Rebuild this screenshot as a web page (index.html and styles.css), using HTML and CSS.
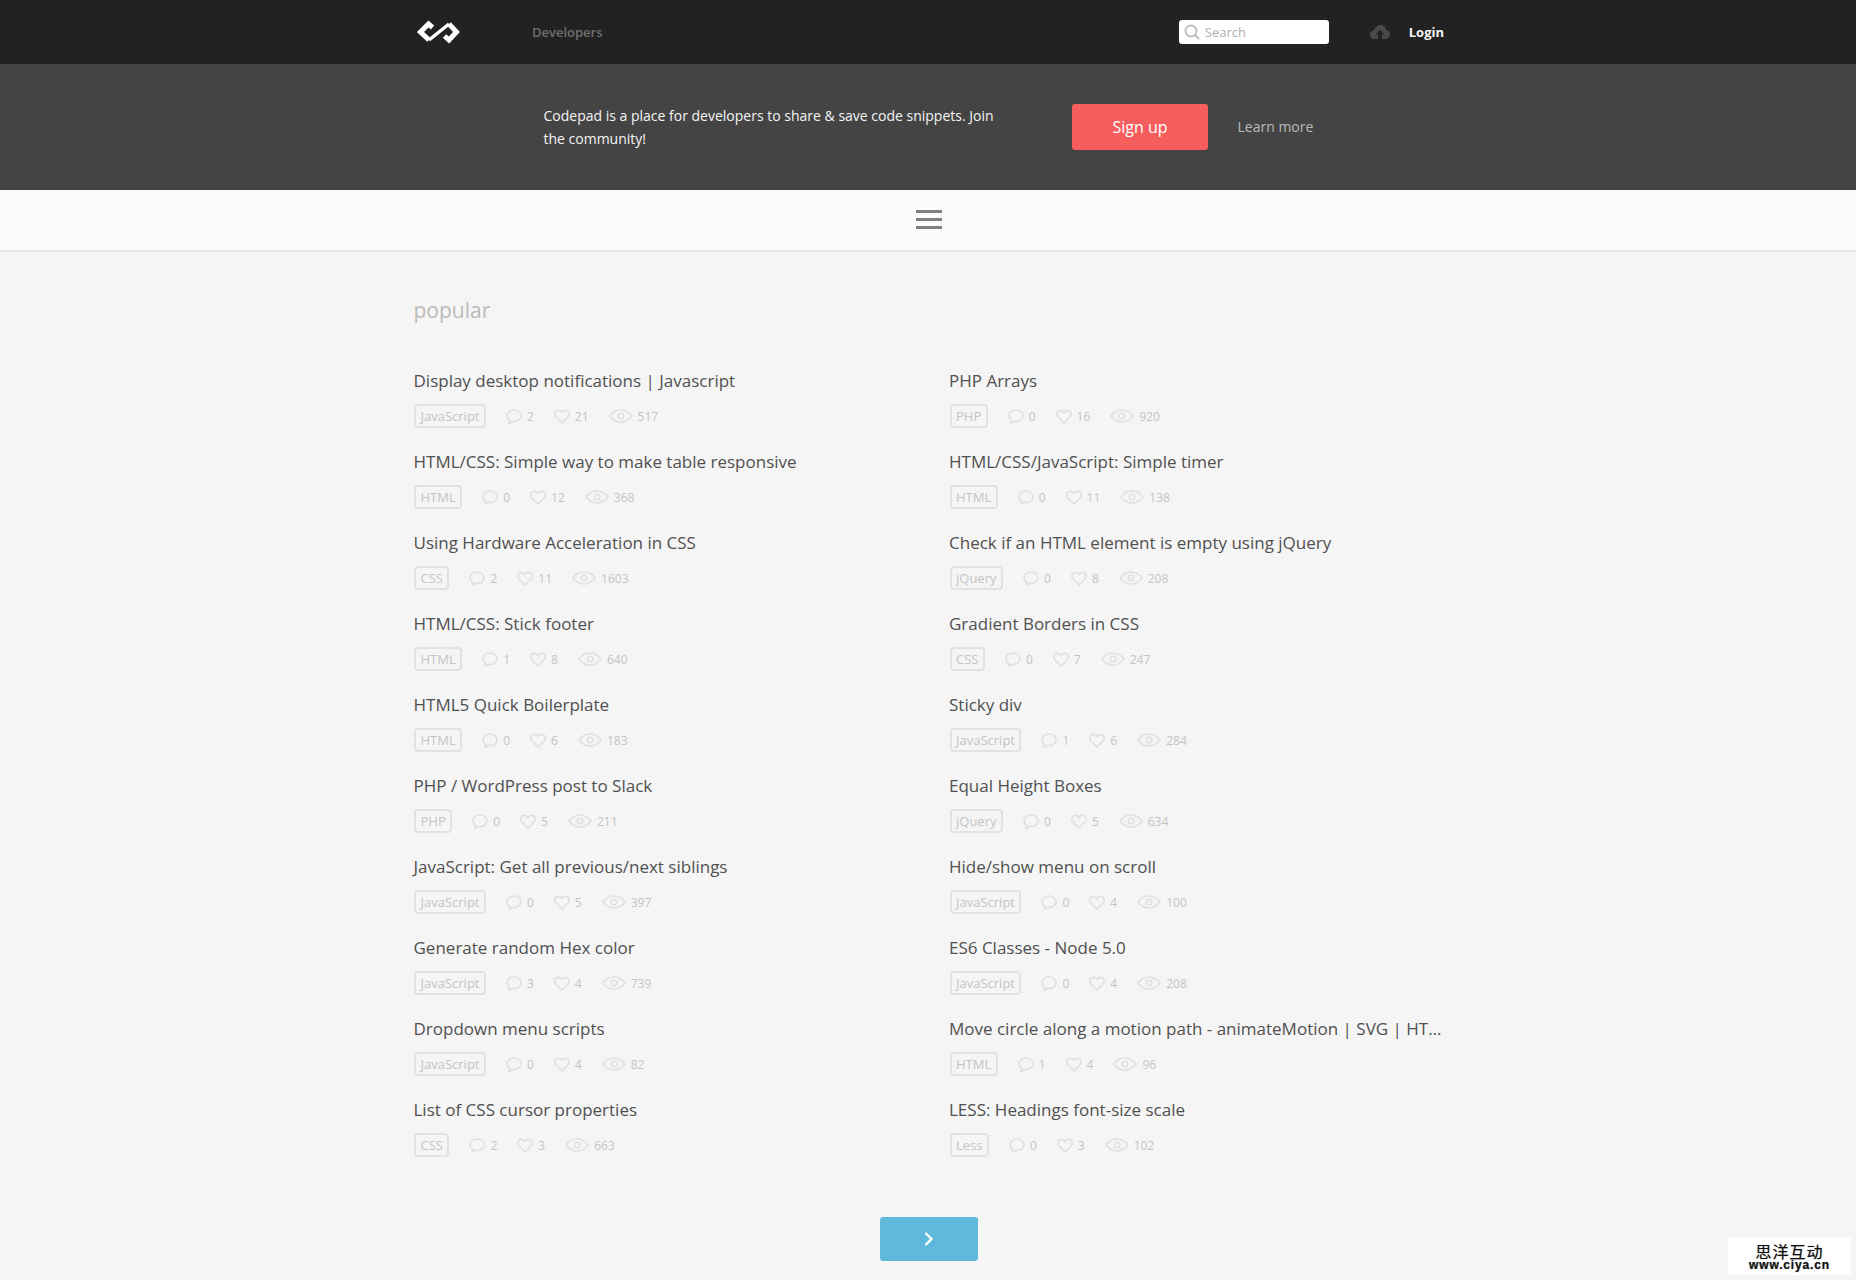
FILE: index.html
```html
<!DOCTYPE html>
<html>
<head>
    <meta charset="utf-8" />
    <title>Codepad</title>
    <link rel="stylesheet" href="styles.css">
</head>
<body>
    <div class="top-bar">
        <div class="top-bar-inner">
            <svg class="logo" width="44" height="24" viewBox="0 0 44 24">
                <path d="M15.5 7.5 L11.5 4 L3.5 12 L12 20" fill="none" stroke="#fff" stroke-width="5"/>
                <path d="M12 20 L32 4" fill="none" stroke="#fff" stroke-width="3.500"/>
                <path d="M32 4 L39.500 12 L32 20 L27.5 16" fill="none" stroke="#fff" stroke-width="5"/>
            </svg>
            <a class="top-bar-link">Developers</a>
            <div class="search-box">
                <svg width="16" height="16" viewBox="0 0 16 16">
                    <circle cx="7" cy="7" r="5.5" fill="none" stroke="#bbb" stroke-width="1.8"/>
                    <path d="M11 11 L15 15" stroke="#bbb" stroke-width="2"/>
                </svg>
                <span class="search-box-text">Search</span>
            </div>
            <svg class="cloud" width="20" height="14" viewBox="0 0 20 14">
                <path d="M4.5 14 C1 14 0 11.500 0 9.500 C0 7 2 5.500 4 5.500 C5 2 8 0 11 0 C14 0 16 2.500 16 5 C18.500 5.500 20 7.500 20 9.500 C20 12 18 14 15.500 14 Z" fill="#4a4a4a"/>
                <path d="M10 5 L14.500 9.500 L12 9.500 L12 14 L8 14 L8 9.500 L5.500 9.500 Z" fill="#222"/>
            </svg>
            <a class="login-link">Login</a>
        </div>
    </div>

    <div class="banner">
        <div class="banner-inner">
            <p class="banner-text">Codepad is a place for developers to share &amp; save code snippets. Join the community!</p>
            <a class="signup-button">Sign up</a>
            <a class="learn-more">Learn more</a>
        </div>
    </div>

    <div class="menu-bar">
        <div class="menu-icon">
            <span></span>
            <span></span>
            <span></span>
        </div>
    </div>

    <div class="main">
        <h2 class="main-title">popular</h2>
        <div class="post-list" id="posts"></div>
        <a class="next-button">
            <svg width="10" height="14" viewBox="0 0 10 14">
                <path d="M1.500 1 L7.500 7 L1.500 13" fill="none" stroke="#fff" stroke-width="2.400"/>
            </svg>
        </a>
    </div>

    <div class="watermark">
        <div class="watermark-cn">思洋互动</div>
        <div class="watermark-url">www.ciya.cn</div>
    </div>

<script>
    var posts = [
        ['Display desktop notifications | Javascript', 'JavaScript', 2, 21, 517],
        ['PHP Arrays', 'PHP', 0, 16, 920],
        ['HTML/CSS: Simple way to make table responsive', 'HTML', 0, 12, 368],
        ['HTML/CSS/JavaScript: Simple timer', 'HTML', 0, 11, 138],
        ['Using Hardware Acceleration in CSS', 'CSS', 2, 11, 1603],
        ['Check if an HTML element is empty using jQuery', 'jQuery', 0, 8, 208],
        ['HTML/CSS: Stick footer', 'HTML', 1, 8, 640],
        ['Gradient Borders in CSS', 'CSS', 0, 7, 247],
        ['HTML5 Quick Boilerplate', 'HTML', 0, 6, 183],
        ['Sticky div', 'JavaScript', 1, 6, 284],
        ['PHP / WordPress post to Slack', 'PHP', 0, 5, 211],
        ['Equal Height Boxes', 'jQuery', 0, 5, 634],
        ['JavaScript: Get all previous/next siblings', 'JavaScript', 0, 5, 397],
        ['Hide/show menu on scroll', 'JavaScript', 0, 4, 100],
        ['Generate random Hex color', 'JavaScript', 3, 4, 739],
        ['ES6 Classes - Node 5.0', 'JavaScript', 0, 4, 208],
        ['Dropdown menu scripts', 'JavaScript', 0, 4, 82],
        ['Move circle along a motion path - animateMotion | SVG | HT…', 'HTML', 1, 4, 96],
        ['List of CSS cursor properties', 'CSS', 2, 3, 663],
        ['LESS: Headings font-size scale', 'Less', 0, 3, 102]
    ];

    var comment = '<svg width="16" height="15" viewBox="0 0 16 15"><path d="M8 1 C4 1 1 3.500 1 6.800 C1 8.700 2 10.200 3.600 11.200 L3.200 14 L6.500 12.400 C7 12.500 7.500 12.500 8 12.500 C12 12.500 15 10 15 6.800 C15 3.500 12 1 8 1 Z" fill="none" stroke="#e0e0e0" stroke-width="1.700"/></svg>';
    var heart = '<svg width="16" height="15" viewBox="0 0 16 15"><path d="M8 14 L2 8 C0.300 6.200 0.500 3.500 2 2.200 C3.700 0.800 6.300 1.100 8 3.400 C9.700 1.100 12.300 0.800 14 2.200 C15.500 3.500 15.700 6.200 14 8 Z" fill="none" stroke="#e0e0e0" stroke-width="1.700"/></svg>';
    var eye = '<svg width="24" height="14" viewBox="0 0 24 14"><path d="M1 7 C4 3 8 1 12 1 C16 1 20 3 23 7 C20 11 16 13 12 13 C8 13 4 11 1 7 Z" fill="none" stroke="#e0e0e0" stroke-width="1.600"/><circle cx="12" cy="7" r="2.800" fill="none" stroke="#e0e0e0" stroke-width="1.600"/></svg>';

    var html = '';
    posts.forEach(function(p) {
        html += '<div class="post">' +
            '<a class="post-title">' + p[0] + '</a>' +
            '<div class="post-meta">' +
            '<span class="post-tag">' + p[1] + '</span>' +
            '<span class="post-stat post-stat-first">' + comment + p[2] + '</span>' +
            '<span class="post-stat">' + heart + p[3] + '</span>' +
            '<span class="post-stat">' + eye + p[4] + '</span>' +
            '</div></div>';
    });
    document.getElementById('posts').innerHTML = html;
</script>
</body>
</html>
```

FILE: styles.css
```css
body {
    margin: 0;
    padding: 0;
    background-color: #F5F5F5;
    font-family: "Open Sans", sans-serif;
    height: 1280px;
    overflow: hidden;
    position: relative;
}

.top-bar {
    height: 64px;
    background-color: #222222;
}

.top-bar-inner {
    width: 1030px;
    height: 64px;
    margin-left: 414px;
    display: flex;
    align-items: center;
}

.logo {
    margin-left: 3px;
}

.top-bar-link {
    margin-left: 71px;
    font-size: 13px;
    font-weight: 600;
    color: #707070;
}

.search-box {
    margin-left: auto;
    width: 150px;
    height: 24px;
    background-color: #FFFFFF;
    border-radius: 3px;
    display: flex;
    align-items: center;
    padding-left: 5px;
    box-sizing: border-box;
}

.search-box-text {
    margin-left: 5px;
    font-size: 13px;
    color: #B0B0B0;
}

.cloud {
    margin-left: 41px;
}

.login-link {
    margin-left: 19px;
    font-size: 13px;
    font-weight: 700;
    color: #F5F5F5;
}

.banner {
    height: 126px;
    background-color: #444444;
}

.banner-inner {
    width: 1030px;
    height: 126px;
    margin-left: 414px;
    display: flex;
    align-items: center;
}

.banner-text {
    margin: 0 0 0 129.5px;
    width: 464px;
    font-size: 14px;
    line-height: 23px;
    color: #F5F5F5;
}

.signup-button {
    margin-left: 64.5px;
    width: 136px;
    height: 46px;
    background-color: #F65E5E;
    border-radius: 3px;
    color: #FFFFFF;
    font-size: 16px;
    line-height: 46px;
    text-align: center;
}

.learn-more {
    margin-left: 29.5px;
    margin-bottom: 2px;
    font-size: 14px;
    color: #BBBBBB;
}

.menu-bar {
    height: 62px;
    padding: 0 0 2px 2px;
    background-color: #FBFBFB;
    border-bottom: 2px solid #E8E8E8;
    box-sizing: border-box;
    display: flex;
    align-items: center;
    justify-content: center;
}

.menu-icon {
    width: 26px;
    display: flex;
    flex-direction: column;
    gap: 5px;
}

.menu-icon span {
    display: block;
    height: 3px;
    background-color: #808080;
}

.main {
    width: 1030px;
    margin-left: 413.5px;
}

.main-title {
    margin: 0;
    padding-top: 43px;
    font-size: 21px;
    line-height: 30px;
    font-weight: 400;
    color: #BBBBBB;
}

.post-list {
    margin-top: 45px;
    display: grid;
    grid-template-columns: 494.5px 494px;
    column-gap: 41px;
}

.post {
    height: 81px;
    min-width: 0;
}

.post-title {
    display: block;
    font-size: 17px;
    line-height: 22px;
    color: #505050;
    white-space: nowrap;
}

.post-meta {
    margin-top: 12px;
    display: flex;
    align-items: center;
    height: 24px;
}

.post-tag {
    border: 2px solid #E2E2E2;
    border-radius: 4px;
    padding: 0 4.5px;
    font-size: 13px;
    line-height: 20px;
    color: #C4C4C4;
    margin-left: 0.5px;
}

.post-stat {
    display: flex;
    align-items: center;
    font-size: 12px;
    color: #C4C4C4;
    gap: 5px;
    margin-left: 20px;
}

.post-stat-first {
    margin-left: 20px;
}

.next-button {
    display: flex;
    align-items: center;
    justify-content: center;
    width: 98px;
    height: 44px;
    margin: 37px 0 0 466.5px;
    background-color: #5FB9DB;
    border-radius: 3px;
}

.watermark {
    position: absolute;
    right: 5px;
    bottom: 5px;
    width: 123px;
    height: 38px;
    background-color: #FFFFFF;
    text-align: center;
    color: #111111;
    font-family: "Noto Sans CJK SC", sans-serif;
    text-shadow: 0 0 1px #777777;
}

.watermark-cn {
    font-size: 16px;
    line-height: 18px;
    padding-top: 5px;
    letter-spacing: 1px;
}

.watermark-url {
    font-family: "Liberation Sans", sans-serif;
    font-size: 12px;
    line-height: 10px;
    font-weight: 700;
    letter-spacing: 0.850px;
}
```
